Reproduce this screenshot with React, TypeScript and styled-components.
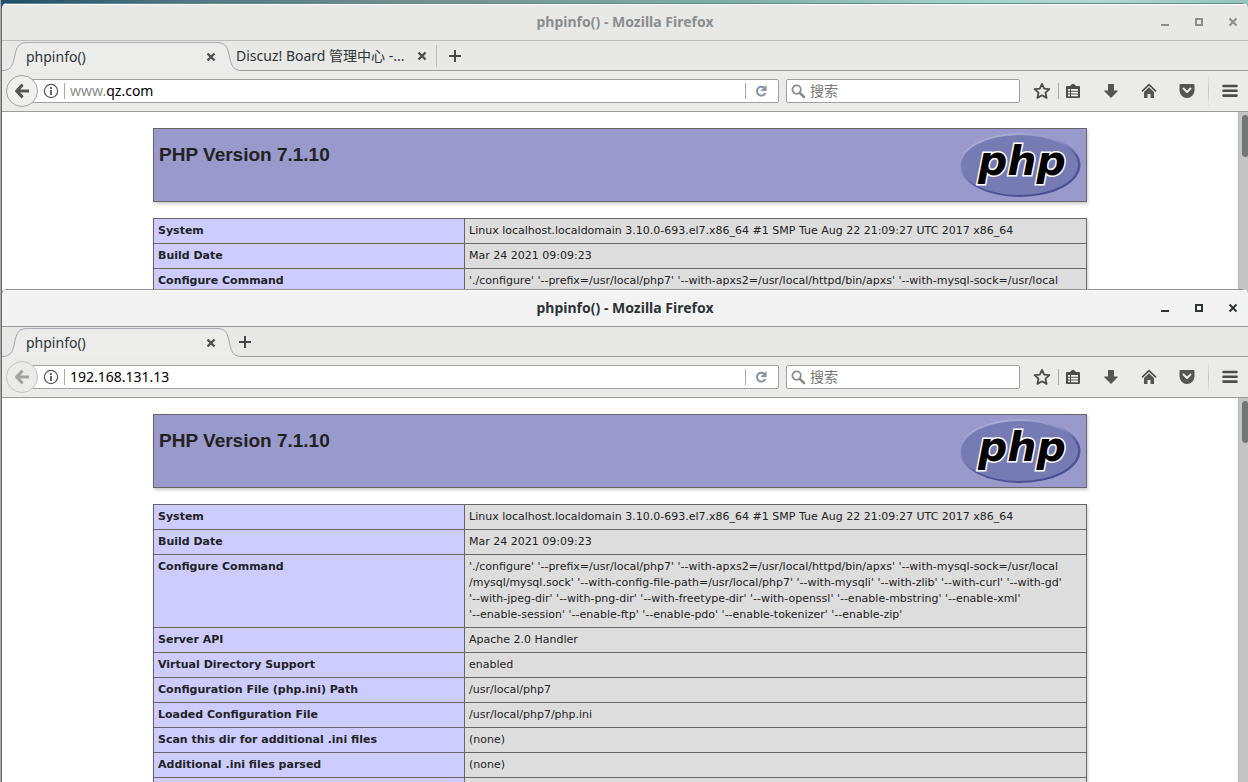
import React, { useId } from "react";
import styled, { createGlobalStyle, css } from "styled-components";

const uiFont = `"Noto Sans", "Noto Sans CJK SC", sans-serif`;
const pageFont = `"DejaVu Sans", Verdana, sans-serif`;

const GlobalStyle = createGlobalStyle`
  *, *::before, *::after { box-sizing: border-box; }
  body { margin: 0; background: #ffffff; }
  button { appearance: none; border: 0; background: none; padding: 0; margin: 0; font: inherit; color: inherit; }
  svg { display: block; }
`;

const Desktop = styled.div`
  display: flex;
  flex-direction: column;
  height: 100vh;
  overflow: hidden;
  padding: 3px 0 0 1px;
  background: linear-gradient(90deg, #1d4f68 0%, #4f7482 14%, #769092 34%, #7fb0ac 60%, #9fd0c6 75%, #b0d8d0 88%, #94c4bc 100%);
  font-family: ${uiFont};
  box-shadow: inset 1px 0 0 #a9aaaa;
`;

const Window = styled.section<{ $front?: boolean }>`
  display: flex;
  flex-direction: column;
  border-left: 1px solid #666a6a;
  background: #ffffff;
  border-radius: 6px 6px 0 0;
  overflow: hidden;
  ${({ $front }) =>
    $front
      ? css`
          position: relative;
          flex: 1;
          min-height: 0;
          margin-top: -7px;
        `
      : css`
          flex: none;
        `}
`;

const TitleBar = styled.header<{ $front?: boolean }>`
  display: grid;
  grid-template-columns: 1fr auto 1fr;
  align-items: center;
  height: 38px;
  border-top: 1px solid ${({ $front }) => ($front ? "#8f918f" : "#5f8a88")};
  border-bottom: 1px solid ${({ $front }) => ($front ? "#979a96" : "#bbbbb8")};
  background: ${({ $front }) => ($front ? "#f3f3f3" : "#e8e8e6")};
  color: ${({ $front }) => ($front ? "#2e3436" : "#8b8e8f")};
  box-shadow: inset 0 1px 0 #ffffff;
`;

const Title = styled.h1`
  grid-column: 2;
  margin: 0;
  font-size: 14px;
  line-height: 18px;
  font-weight: 700;
`;

const WindowControls = styled.div`
  display: flex;
  justify-content: flex-end;
  gap: 18px;
  padding-right: 7px;
`;

const ControlButton = styled.button`
  width: 16px;
  height: 16px;
`;

const TabStrip = styled.nav`
  display: flex;
  height: 30px;
  background: #e8e8e6;
  color: #2e3436;
  font-size: 14px;
`;

const ActiveTab = styled.div`
  display: flex;
  width: 240px;
`;

const TabEdge = styled.svg`
  flex: none;
  width: 26px;
  height: 30px;
`;

const TabFace = styled.div`
  display: flex;
  flex: 1;
  align-items: center;
  margin-top: 1px;
  border-top: 1px solid #a9adb4;
  background: #ececea;
`;

const InactiveTab = styled.div`
  display: flex;
  align-items: center;
  width: 185px;
  border-bottom: 1px solid #9c9d9b;
`;

const TabLabel = styled.button`
  flex: 1;
  min-width: 0;
  margin-left: -6px;
  line-height: 20px;
  text-align: left;
  white-space: nowrap;
`;

const ActiveLabel = styled(TabLabel)`
  margin-left: -2px;
`;

const TabClose = styled.button`
  width: 10px;
  height: 10px;
`;

const StripRest = styled.div<{ $divided?: boolean }>`
  display: flex;
  flex: 1;
  align-items: center;
  border-bottom: 1px solid #9c9d9b;
  &::before {
    content: "";
    width: ${({ $divided }) => ($divided ? "1px" : "0")};
    height: 22px;
    margin-left: ${({ $divided }) => ($divided ? "9px" : "0")};
    background: #bcbcba;
  }
`;

const NewTab = styled.button<{ $divided?: boolean }>`
  width: 14px;
  height: 14px;
  margin-left: ${({ $divided }) => ($divided ? "11px" : "-4px")};
`;

const Toolbar = styled.div`
  display: flex;
  align-items: center;
  height: 41px;
  padding: 0 4px;
  border-bottom: 1px solid #9c9d9b;
  background: #ebebe9;
`;

const BackButton = styled.button`
  position: relative;
  z-index: 1;
  flex: none;
  width: 32px;
  height: 32px;
  border: 1px solid #a3a4a2;
  border-radius: 50%;
  background: #f0f0ef;
  color: #565656;
  &:disabled {
    border-color: #c4c4c2;
    background: #ebebe9;
    color: #a2a2a0;
  }
  svg {
    margin: auto;
  }
`;

const Field = styled.div`
  display: flex;
  align-items: center;
  height: 24px;
  border: 1px solid #a0a19f;
  border-radius: 2px;
  background: #ffffff;
`;

const AddressField = styled(Field)`
  flex: 1;
  min-width: 0;
  margin-left: -8px;
  padding-left: 12px;
`;

const SearchField = styled(Field)`
  flex: none;
  width: 234px;
  margin-left: 7px;
  padding-left: 4px;
`;

const TextInput = styled.input`
  flex: 1;
  min-width: 0;
  height: 20px;
  padding: 0;
  border: 0;
  outline: 0;
  background: transparent;
  color: #000000;
  font: 14px/20px ${uiFont};
  &::placeholder {
    color: #777777;
    opacity: 1;
  }
`;

const HostPrefix = styled.span`
  color: #8c8c8c;
  font-size: 14px;
  line-height: 20px;
`;

const Divider = styled.span`
  flex: none;
  width: 1px;
  height: 16px;
  background: #a8a8a6;
`;

const InfoButton = styled.button`
  width: 16px;
  height: 16px;
  margin-right: 5px;
`;

const AddressText = styled.label`
  display: flex;
  flex: 1;
  min-width: 0;
  padding-left: 5px;
`;

const ReloadButton = styled.button`
  width: 16px;
  height: 16px;
  margin: 0 9px 0 7px;
`;

const SearchText = styled.label`
  display: flex;
  flex: 1;
  min-width: 0;
  align-items: center;
  gap: 4px;
`;

const Actions = styled.div`
  display: flex;
  align-items: center;
  gap: 10px;
  margin-left: 8px;
`;

const StarGroup = styled.div`
  display: flex;
  align-items: center;
  gap: 2px;
  margin-right: -10px;
`;

const ActionButton = styled.button`
  display: grid;
  place-items: center;
  width: 28px;
  height: 28px;
`;

const MenuGroup = styled.div`
  display: flex;
  align-items: center;
  gap: 7px;
  margin-left: -3px;
  &::before {
    content: "";
    width: 1px;
    height: 34px;
    background: linear-gradient(#ebebe9, #c4c4c2, #ebebe9);
  }
`;

const Viewport = styled.div<{ $clipped?: boolean }>`
  display: flex;
  overflow: hidden;
  ${({ $clipped }) =>
    $clipped
      ? css`
          height: 184px;
        `
      : css`
          flex: 1;
          min-height: 0;
        `}
`;

const ScrollTrack = styled.div`
  flex: none;
  width: 10px;
  padding: 3px 0 0 3px;
  border-left: 1px solid #b4b5b4;
  background: #c3c4c3;
`;

const ScrollThumb = styled.div`
  height: 42px;
  border-radius: 4px 3px 3px 4px;
  background: #727677;
`;

const Page = styled.main`
  flex: 1;
  min-width: 0;
  padding: 16px;
  color: #222222;
  font-family: ${pageFont};
`;

const Center = styled.div`
  width: 934px;
  max-width: 100%;
  margin: 0 auto;
`;

const Banner = styled.div`
  display: flex;
  justify-content: space-between;
  height: 74px;
  margin-bottom: 16px;
  padding: 4px 5px;
  border: 1px solid #666666;
  background: #9999cc;
  box-shadow: 1px 2px 3px #cccccc;
`;

const BannerTitle = styled.h2`
  margin: 10px 0 0;
  font: 700 19px/24px "Liberation Sans", Arial, sans-serif;
`;

const InfoTable = styled.table`
  width: 100%;
  border-collapse: collapse;
  table-layout: fixed;
  box-shadow: 1px 2px 3px #cccccc;
  font-size: 11px;
  line-height: 16px;
`;

const cell = css`
  padding: 4px;
  border: 1px solid #666666;
  text-align: left;
  vertical-align: top;
`;

const NameCell = styled.th`
  ${cell}
  width: 311px;
  background: #ccccff;
  font-weight: 700;
`;

const ValueCell = styled.td`
  ${cell}
  background: #dddddd;
  white-space: pre-line;
`;

const configureLines = [
  "'./configure' '--prefix=/usr/local/php7' '--with-apxs2=/usr/local/httpd/bin/apxs' '--with-mysql-sock=/usr/local",
  "/mysql/mysql.sock' '--with-config-file-path=/usr/local/php7' '--with-mysqli' '--with-zlib' '--with-curl' '--with-gd'",
  "'--with-jpeg-dir' '--with-png-dir' '--with-freetype-dir' '--with-openssl' '--enable-mbstring' '--enable-xml'",
  "'--enable-session' '--enable-ftp' '--enable-pdo' '--enable-tokenizer' '--enable-zip'",
];

type Row = [string, string];

const topRows: Row[] = [
  ["System", "Linux localhost.localdomain 3.10.0-693.el7.x86_64 #1 SMP Tue Aug 22 21:09:27 UTC 2017 x86_64"],
  ["Build Date", "Mar 24 2021 09:09:23"],
];

const coveredRows: Row[] = [...topRows, ["Configure Command", configureLines[0]]];

const allRows: Row[] = [
  ...topRows,
  ["Configure Command", configureLines.join("\n")],
  ["Server API", "Apache 2.0 Handler"],
  ["Virtual Directory Support", "enabled"],
  ["Configuration File (php.ini) Path", "/usr/local/php7"],
  ["Loaded Configuration File", "/usr/local/php7/php.ini"],
  ["Scan this dir for additional .ini files", "(none)"],
  ["Additional .ini files parsed", "(none)"],
  ["PHP API", "20160303"],
];

const logoText = {
  x: 19,
  y: 42,
  fontFamily: "DejaVu Sans, Verdana, sans-serif",
  fontSize: 41,
  fontWeight: 700,
  fontStyle: "italic",
};

function PhpLogo() {
  const id = useId();
  return (
    <svg width="122" height="66" viewBox="0 0 122 66" role="img" aria-label="PHP logo">
      <defs>
        <linearGradient id={id} x1="0.2" y1="0" x2="0.75" y2="1">
          <stop offset="0" stopColor="#b4b6dc" />
          <stop offset="0.35" stopColor="#9093c6" />
          <stop offset="0.6" stopColor="#55589a" />
          <stop offset="1" stopColor="#484c90" />
        </linearGradient>
      </defs>
      <ellipse cx="61" cy="32" rx="60.5" ry="32" fill={`url(#${id})`} />
      <ellipse cx="60.5" cy="32" rx="58.5" ry="30" fill="#777bb3" />
      <text {...logoText} fill="#000000" stroke="#ffffff" strokeWidth="3" paintOrder="stroke">
        php
      </text>
    </svg>
  );
}

function CloseGlyph() {
  return (
    <svg width="10" height="10" viewBox="0 0 10 10" stroke="#4c5052" strokeWidth="2.4">
      <path d="M1.5 1.5 8.5 8.5M8.5 1.5 1.5 8.5" />
    </svg>
  );
}

function EdgeShape({ flip }: { flip?: boolean }) {
  const curve = "C8 29.5 10.5 26 12.5 16 C14.5 5 17 1.5 26 1.5";
  return (
    <TabEdge viewBox="0 0 26 30" aria-hidden="true">
      <g transform={flip ? "translate(26 0) scale(-1 1)" : undefined}>
        <path d={`M0 30 L0 29.5 ${curve} L26 30 Z`} fill="#ececea" />
        <path d={`M0 29.5 ${curve}`} fill="none" stroke="#a0a5ad" />
      </g>
    </TabEdge>
  );
}

function NavBar({ prefix, address, canGoBack }: { prefix?: string; address: string; canGoBack?: boolean }) {
  return (
    <Toolbar>
      <BackButton aria-label="Back" disabled={!canGoBack}>
        <svg width="16" height="16" viewBox="0 0 16 16" fill="none" stroke="currentColor" strokeWidth="3">
          <path d="M8.6 1.6 2.6 8l6 6.4M3 8h12" strokeLinejoin="round" />
        </svg>
      </BackButton>
      <AddressField>
        <InfoButton aria-label="Site information">
          <svg width="16" height="16" viewBox="0 0 16 16" fill="none" stroke="#555555">
            <circle cx="8" cy="8" r="6.6" strokeWidth="1.2" />
            <path d="M8 7v5M8 4v2" strokeWidth="1.8" />
          </svg>
        </InfoButton>
        <Divider />
        <AddressText>
          {prefix && <HostPrefix>{prefix}</HostPrefix>}
          <TextInput type="text" aria-label="Address" defaultValue={address} />
        </AddressText>
        <Divider />
        <ReloadButton aria-label="Reload">
          <svg width="16" height="16" viewBox="0 0 16 16">
            <path d="M11 4.6A4.4 4.4 0 1 0 12.4 10" fill="none" stroke="#8193a4" strokeWidth="2" />
            <path d="M13.5 2v6h-6z" fill="#8193a4" />
          </svg>
        </ReloadButton>
      </AddressField>
      <SearchField>
        <SearchText>
          <svg width="15" height="15" viewBox="0 0 15 15" fill="none" stroke="#8c8c8c" aria-hidden="true">
            <circle cx="5.6" cy="5.6" r="4.2" strokeWidth="1.8" />
            <path d="M8.8 8.8 13 13" strokeWidth="2.6" strokeLinecap="round" />
          </svg>
          <TextInput type="text" aria-label="搜索" placeholder="搜索" />
        </SearchText>
      </SearchField>
      <Actions>
        <StarGroup>
          <ActionButton aria-label="Bookmark this page">
            <svg width="18" height="18" viewBox="0 0 18 18" fill="none" stroke="#4c4c4c" strokeWidth="1.8">
              <path d="M9 1.8 11.2 6.6l5.2.6-3.9 3.5 1.1 5.2L9 13.3l-4.6 2.6 1.1-5.2L1.6 7.2l5.2-.6z" strokeLinejoin="round" />
            </svg>
          </ActionButton>
          <Divider />
        </StarGroup>
        <ActionButton aria-label="Show bookmarks">
          <svg width="16" height="16" viewBox="0 0 16 16">
            <path d="M2 3h3l2-2h2l2 2h3q1 0 1 1v10q0 1-1 1H2q-1 0-1-1V4q0-1 1-1z" fill="#4c4c4c" />
            <path d="M3 6h2v1.7H3zM6 6h7v1.7H6zM3 8.8h2v1.7H3zM6 8.8h7v1.7H6zM3 11.5h2v1.7H3zM6 11.5h7v1.7H6z" fill="#f4f4f3" />
          </svg>
        </ActionButton>
        <ActionButton aria-label="Downloads">
          <svg width="16" height="16" viewBox="0 0 16 16" fill="#555555">
            <path d="M5 1.5q0-.5.5-.5h5q.5 0 .5.5V7.5h3.500q.6.3.2.8L8.500 14.600q-.5.4-1 0L1.3 8.3q-.4-.5.2-.8H5z" />
          </svg>
        </ActionButton>
        <ActionButton aria-label="Home">
          <svg width="16" height="16" viewBox="0 0 16 16">
            <path d="M1 8.3 8 1.700l7 6.600" fill="none" stroke="#4c4c4c" strokeWidth="1.6" />
            <path d="M8 4.300 13 9v6H9.500v-4h-3v4H3V9z" fill="#555555" />
          </svg>
        </ActionButton>
        <ActionButton aria-label="Save to Pocket">
          <svg width="16" height="16" viewBox="0 0 16 16">
            <path d="M1.5 1h13q1 0 1 1v5.500a7.500 7.500 0 0 1-15 0V2q0-1 1-1z" fill="#555555" />
            <path d="M4.500 5.500 8 9l3.500-3.500" fill="none" stroke="#ebebe9" strokeWidth="2" strokeLinecap="round" strokeLinejoin="round" />
          </svg>
        </ActionButton>
        <MenuGroup>
          <ActionButton aria-label="Open menu">
            <svg width="16" height="14" viewBox="0 0 16 14" stroke="#4c4c4c" strokeWidth="2.6" strokeLinecap="round">
              <path d="M1.5 2h13M1.5 6.8h13M1.5 11.6h13" />
            </svg>
          </ActionButton>
        </MenuGroup>
      </Actions>
    </Toolbar>
  );
}

interface BrowserProps {
  front?: boolean;
  otherTab?: string;
  prefix?: string;
  address: string;
  rows: Row[];
}

function Browser({ front, otherTab, prefix, address, rows }: BrowserProps) {
  return (
    <Window $front={front}>
      <TitleBar $front={front}>
        <Title>phpinfo() - Mozilla Firefox</Title>
        <WindowControls>
          <ControlButton aria-label="Minimize">
            <svg width="16" height="16" viewBox="0 0 16 16" fill="currentColor">
              <path d="M4 10h8v2H4z" />
            </svg>
          </ControlButton>
          <ControlButton aria-label="Maximize">
            <svg width="16" height="16" viewBox="0 0 16 16" fill="none" stroke="currentColor" strokeWidth="2">
              <path d="M5 5h6v6H5z" />
            </svg>
          </ControlButton>
          <ControlButton aria-label="Close">
            <svg width="16" height="16" viewBox="0 0 16 16" stroke="currentColor" strokeWidth="2">
              <path d="M4.5 4.5l7 7M11.5 4.5l-7 7" />
            </svg>
          </ControlButton>
        </WindowControls>
      </TitleBar>
      <TabStrip>
        <ActiveTab>
          <EdgeShape />
          <TabFace>
            <ActiveLabel>phpinfo()</ActiveLabel>
            <TabClose aria-label="Close tab">
              <CloseGlyph />
            </TabClose>
          </TabFace>
          <EdgeShape flip />
        </ActiveTab>
        {otherTab && (
          <InactiveTab>
            <TabLabel>{otherTab}</TabLabel>
            <TabClose aria-label="Close tab">
              <CloseGlyph />
            </TabClose>
          </InactiveTab>
        )}
        <StripRest $divided={!!otherTab}>
          <NewTab $divided={!!otherTab} aria-label="New tab">
            <svg width="14" height="14" viewBox="0 0 14 14" stroke="#454849" strokeWidth="2">
              <path d="M7 1v12M1 7h12" />
            </svg>
          </NewTab>
        </StripRest>
      </TabStrip>
      <NavBar prefix={prefix} address={address} canGoBack={!front} />
      <Viewport $clipped={!front}>
        <Page>
          <Center>
            <Banner>
              <BannerTitle>PHP Version 7.1.10</BannerTitle>
              <PhpLogo />
            </Banner>
            <InfoTable>
              <tbody>
                {rows.map(([name, value]) => (
                  <tr key={name}>
                    <NameCell scope="row">{name}</NameCell>
                    <ValueCell>{value}</ValueCell>
                  </tr>
                ))}
              </tbody>
            </InfoTable>
          </Center>
        </Page>
        <ScrollTrack>
          <ScrollThumb />
        </ScrollTrack>
      </Viewport>
    </Window>
  );
}

export default function App() {
  return (
    <>
      <GlobalStyle />
      <Desktop>
        <Browser prefix="www." address="qz.com" otherTab="Discuz! Board 管理中心 -..." rows={coveredRows} />
        <Browser front address="192.168.131.13" rows={allRows} />
      </Desktop>
    </>
  );
}
